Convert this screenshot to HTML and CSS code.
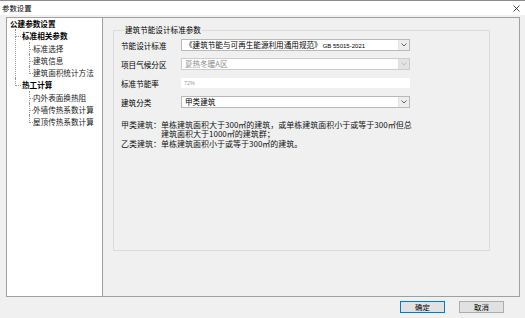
FILE: index.html
```html
<!DOCTYPE html>
<html lang="zh-CN">
<head>
    <meta charset="UTF-8">
    <title>参数设置</title>
    <link rel="stylesheet" href="styles.css">
</head>
<body>
    <div class="window">
        <header class="titlebar">
            <span class="title">参数设置</span>
            <svg class="close" width="7" height="7" viewBox="0 0 7 7">
                <path d="M0.5 0.5 L6.5 6.5 M6.5 0.5 L0.5 6.5" stroke="#333" stroke-width="0.9" fill="none"/>
            </svg>
        </header>

        <div class="panel">
            <!-- ===== NAV TREE ===== -->
            <nav class="tree">
                <div class="root">公建参数设置</div>
                <ul class="level1">
                    <li>
                        <span class="node">标准相关参数</span>
                        <ul class="level2">
                            <li>标准选择</li>
                            <li>建筑信息</li>
                            <li>建筑面积统计方法</li>
                        </ul>
                    </li>
                    <li>
                        <span class="node">热工计算</span>
                        <ul class="level2">
                            <li>内外表面换热阻</li>
                            <li>外墙传热系数计算</li>
                            <li>屋顶传热系数计算</li>
                        </ul>
                    </li>
                </ul>
            </nav>

            <!-- ===== SETTINGS ===== -->
            <section class="content">
                <fieldset class="group">
                    <legend>建筑节能设计标准参数</legend>

                    <div class="row">
                        <label>节能设计标准</label>
                        <div class="combo">
                            <span class="combo-text">《建筑节能与可再生能源利用通用规范》<span class="code">GB 55015-2021</span></span>
                            <span class="combo-btn">
                                <svg width="6" height="4" viewBox="0 0 6 4"><path d="M0.5 0.5 L3 3 L5.5 0.5" stroke="#555" stroke-width="0.9" fill="none"/></svg>
                            </span>
                        </div>
                    </div>

                    <div class="row">
                        <label>项目气候分区</label>
                        <div class="combo disabled">
                            <span class="combo-text">夏热冬暖A区</span>
                            <span class="combo-btn">
                                <svg width="6" height="4" viewBox="0 0 6 4"><path d="M0.5 0.5 L3 3 L5.5 0.5" stroke="#bbb" stroke-width="0.9" fill="none"/></svg>
                            </span>
                        </div>
                    </div>

                    <div class="row">
                        <label>标准节能率</label>
                        <div class="field">72%</div>
                    </div>

                    <div class="row">
                        <label>建筑分类</label>
                        <div class="combo">
                            <span class="combo-text">甲类建筑</span>
                            <span class="combo-btn">
                                <svg width="6" height="4" viewBox="0 0 6 4"><path d="M0.5 0.5 L3 3 L5.5 0.5" stroke="#555" stroke-width="0.9" fill="none"/></svg>
                            </span>
                        </div>
                    </div>

                    <p class="notes">甲类建筑：单栋建筑面积大于300㎡的建筑，或单栋建筑面积小于或等于300㎡但总<br><span class="indent">建筑面积大于1000㎡的建筑群；</span><br>乙类建筑：单栋建筑面积小于或等于300㎡的建筑。</p>
                </fieldset>
            </section>
        </div>

        <footer class="footer">
            <button class="btn primary">确定</button>
            <button class="btn">取消</button>
        </footer>
    </div>
</body>
</html>
```

FILE: styles.css
```css
/* ===== RESET & BASE ===== */
* {
    margin: 0;
    padding: 0;
    box-sizing: border-box;
}

body {
    font-family: "Noto Sans CJK SC", "Noto Sans", sans-serif;
    font-size: 7.6px;
    color: #000;
    background: #f0f0f0;
}

.window {
    width: 525px;
    height: 318px;
    display: flex;
    flex-direction: column;
    overflow: hidden;
}

/* ===== TITLE BAR ===== */
.titlebar {
    height: 15px;
    background: #fff;
    border-top: 1px solid #8c8c8c;
    display: flex;
    align-items: center;
    justify-content: space-between;
    padding: 0 5px 0 2px;
}

.title {
    font-size: 7.4px;
    line-height: 10px;
}

/* ===== MAIN PANEL ===== */
.panel {
    height: 280px;
    margin: 2px 5px 0 6px;
    border: 1px solid #a0a0a0;
    display: flex;
}

.tree {
    width: 96px;
    background: #fff;
    border-right: 1px solid #a0a0a0;
    padding: 0 0 0 3px;
    line-height: 12.25px;
    white-space: nowrap;
}

.tree ul {
    list-style: none;
}

.root,
.node {
    font-weight: bold;
}

.level1 {
    margin-left: 5px;
}

.level1 > li,
.level2 > li {
    position: relative;
}

.level1 > li {
    padding-left: 7px;
}

.level2 {
    margin-left: 7px;
}

.level2 > li {
    padding-left: 4px;
    color: #1a1a1a;
}

/* dotted connector lines */
.tree li::before {
    content: "";
    position: absolute;
    left: 0;
    top: -1px;
    width: 5px;
    height: 7px;
    border-left: 1px dotted #999;
    border-bottom: 1px dotted #999;
}

.level2 > li::before {
    width: 3px;
}

.tree li::after {
    content: "";
    position: absolute;
    left: 0;
    top: 6px;
    bottom: -1px;
    border-left: 1px dotted #999;
}

.tree li:last-child::after {
    display: none;
}

/* ===== CONTENT ===== */
.content {
    flex: 1;
    display: flex;
    padding: 7px 29px 45px 10px;
}

.group {
    flex: 1;
    min-width: 0;
    border: 1px solid #dcdcdc;
    padding: 4px 7px 0 7px;
}

.group legend {
    margin-left: 3px;
    padding: 0 1px;
    line-height: 10px;
}

.row {
    display: flex;
    align-items: center;
    height: 12px;
    margin-bottom: 7px;
}

.row label {
    width: 60px;
    flex-shrink: 0;
}

.combo {
    width: 229px;
    height: 12px;
    display: flex;
    border: 1px solid #b9b9b9;
    background: #fff;
}

.combo-text {
    flex: 1;
    padding-left: 3px;
    line-height: 10px;
    white-space: nowrap;
    overflow: hidden;
}

.code {
    font-family: "Liberation Sans", sans-serif;
    font-size: 6px;
    margin-left: 1px;
}

.combo-btn {
    width: 11px;
    background: #ededed;
    border-left: 1px solid #e2e2e2;
    display: flex;
    align-items: center;
    justify-content: center;
}

.combo.disabled {
    border-color: #cccccc;
}

.combo.disabled .combo-text {
    color: #8a8a8a;
}

.combo.disabled .combo-btn {
    background: #e3e3e3;
}

.field {
    width: 229px;
    height: 10px;
    background: #fff;
    color: #9a9a9a;
    font-family: "Liberation Sans", sans-serif;
    font-size: 5.5px;
    line-height: 10px;
    padding-left: 3px;
}

/* ===== NOTES ===== */
.notes {
    margin-top: 12px;
    font-size: 8px;
    line-height: 9.4px;
    white-space: nowrap;
    color: #111;
}

.indent {
    padding-left: 5em;
}

/* ===== FOOTER ===== */
.footer {
    flex: 1;
    display: flex;
    justify-content: flex-end;
    align-items: flex-start;
    gap: 14px;
    padding: 4px 21px 0 0;
}

.btn {
    width: 45px;
    height: 12px;
    font-family: inherit;
    font-size: 7.4px;
    line-height: 10px;
    color: #000;
    background: #e1e1e1;
    border: 1px solid #adadad;
}

.btn.primary {
    border-color: #0078d7;
}
```
